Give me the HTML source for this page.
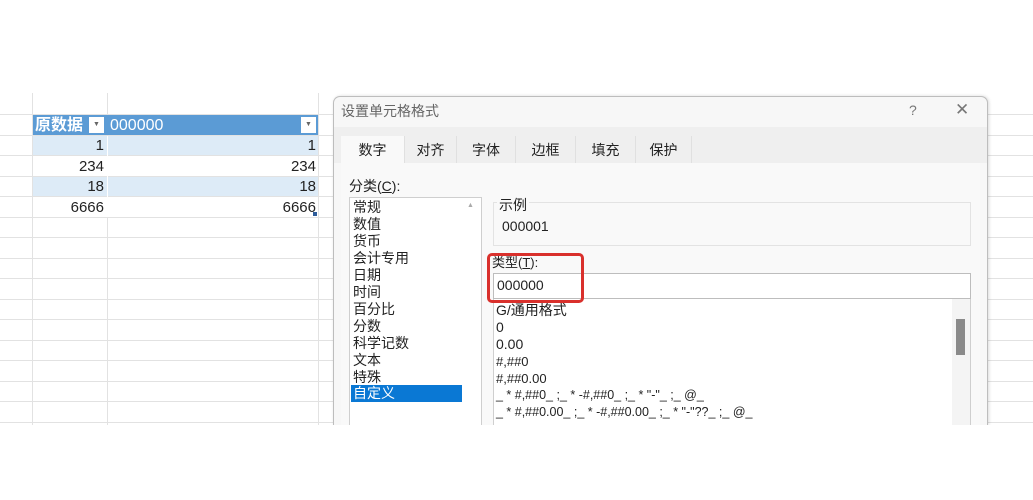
<!DOCTYPE html>
<html><head><meta charset="utf-8"><style>
*{margin:0;padding:0;box-sizing:border-box}
body{width:1033px;height:500px;background:#fff;position:relative;overflow:hidden;font-family:"Liberation Sans","Noto Sans CJK SC",sans-serif;color:#222}
.a{position:absolute}
.hl{position:absolute;height:1px;background:#e2e2e2;left:0;width:1033px}
.vl{position:absolute;width:1px;background:#e2e2e2;top:93px;height:332px}
.num{position:absolute;font-size:15px;text-align:right}
.tab{position:absolute;top:136px;height:27px;font-size:14px;text-align:center;line-height:29px;border-right:1px solid #e0e0e0}
.li{font-size:14px;line-height:17px}
.fl{font-size:13px;line-height:17px}
</style></head><body>
<div class="a" style="left:0;top:93px;width:1033px;height:332px;background:#fff"></div>
<div class="hl" style="top:114px"></div><div class="hl" style="top:135px"></div><div class="hl" style="top:155px"></div><div class="hl" style="top:176px"></div><div class="hl" style="top:196px"></div><div class="hl" style="top:217px"></div><div class="hl" style="top:237px"></div><div class="hl" style="top:258px"></div><div class="hl" style="top:278px"></div><div class="hl" style="top:299px"></div><div class="hl" style="top:319px"></div><div class="hl" style="top:340px"></div><div class="hl" style="top:360px"></div><div class="hl" style="top:381px"></div><div class="hl" style="top:401px"></div><div class="hl" style="top:422px"></div>
<div class="vl" style="left:32px"></div><div class="vl" style="left:107px"></div><div class="vl" style="left:318px"></div>
<div class="a" style="left:33px;top:115px;width:285px;height:20px;background:#5b9bd5"></div>
<div class="a" style="left:35px;top:116px;color:#fff;font-weight:bold;font-size:16px;line-height:19px">原数据</div>
<div class="a" style="left:110px;top:116px;color:#fff;font-size:16px;line-height:19px">000000</div>
<div class="a" style="left:89px;top:117px;width:15px;height:16px;background:#fff;font-size:7px;color:#666;text-align:center;line-height:16px">▼</div>
<div class="a" style="left:301px;top:117px;width:15px;height:16px;background:#fff;font-size:7px;color:#666;text-align:center;line-height:16px">▼</div>
<div class="a" style="left:33px;top:136px;width:285px;height:19px;background:#ddebf7"></div>
<div class="a" style="left:33px;top:177px;width:285px;height:19px;background:#ddebf7"></div>
<div class="a" style="left:107px;top:136px;width:1px;height:81px;background:#fff"></div>
<div class="num" style="right:929px;top:137px">1</div><div class="num" style="right:717px;top:137px">1</div>
<div class="num" style="right:929px;top:158px">234</div><div class="num" style="right:717px;top:158px">234</div>
<div class="num" style="right:929px;top:178px">18</div><div class="num" style="right:717px;top:178px">18</div>
<div class="num" style="right:929px;top:199px">6666</div><div class="num" style="right:717px;top:199px">6666</div>
<div class="a" style="left:313px;top:212px;width:4px;height:4px;background:#2e5c9a"></div>
<div class="a" style="left:333px;top:96px;width:655px;height:329px;background:#f7f7f7;border:1px solid #bdbdbd;border-bottom:none;border-radius:7px 7px 0 0;box-shadow:1px 0 3px rgba(0,0,0,.15)"></div>
<div class="a" style="left:341px;top:102px;font-size:14px;color:#666;line-height:18px">设置单元格格式</div>
<div class="a" style="left:909px;top:102px;font-size:14px;color:#777">?</div>
<div class="a" style="left:955px;top:100px;font-size:17px;color:#777">✕</div>
<div class="a" style="left:334px;top:127px;width:653px;height:36px;background:#efefef"></div>
<div class="tab" style="left:341px;width:64px;background:#f9f9f9;height:28px">数字</div>
<div class="tab" style="left:405px;width:52px">对齐</div>
<div class="tab" style="left:457px;width:59px">字体</div>
<div class="tab" style="left:516px;width:60px">边框</div>
<div class="tab" style="left:576px;width:60px">填充</div>
<div class="tab" style="left:636px;width:56px">保护</div>
<div class="a" style="left:341px;top:163px;width:639px;height:262px;background:#f9f9f9"></div>
<div class="a" style="left:349px;top:176px;font-size:14px">分类(<u>C</u>):</div>
<div class="a" style="left:349px;top:197px;width:133px;height:228px;background:#fff;border:1px solid #cfcfcf;border-bottom:none"></div>
<div class="a" style="left:467px;top:202px;font-size:7px;color:#aaa">▲</div>
<div class="a" style="left:353px;top:199px">
<div class="li">常规</div><div class="li">数值</div><div class="li">货币</div><div class="li">会计专用</div><div class="li">日期</div><div class="li">时间</div><div class="li">百分比</div><div class="li">分数</div><div class="li">科学记数</div><div class="li">文本</div><div class="li">特殊</div></div>
<div class="a" style="left:351px;top:385px;width:111px;height:17px;background:#0a78d4;color:#fff;font-size:14px;line-height:17px;padding-left:2px">自定义</div>
<div class="a" style="left:493px;top:202px;width:478px;height:44px;border:1px solid #e3e3e3"></div>
<div class="a" style="left:497px;top:195px;font-size:14px;background:#f9f9f9;padding:0 2px">示例</div>
<div class="a" style="left:502px;top:218px;font-size:14px">000001</div>
<div class="a" style="left:492px;top:252px;font-size:13px">类型(<u>T</u>):</div>
<div class="a" style="left:493px;top:273px;width:478px;height:26px;background:#fff;border:1px solid #bdbdbd"></div>
<div class="a" style="left:497px;top:277px;font-size:14px">000000</div>
<div class="a" style="left:493px;top:299px;width:478px;height:126px;background:#fff;border:1px solid #cfcfcf;border-top:none;border-bottom:none"></div>
<div class="a" style="left:952px;top:299px;width:18px;height:126px;background:#f4f4f4"></div>
<div class="a" style="left:956px;top:319px;width:9px;height:36px;background:#8a8a8a"></div>
<div class="a" style="left:496px;top:302px">
<div class="fl" style="font-size:14px">G/通用格式</div><div class="fl" style="font-size:14px">0</div><div class="fl" style="font-size:14px">0.00</div><div class="fl">#,##0</div><div class="fl">#,##0.00</div>
<div class="fl" style="font-size:12.5px">_ * #,##0_ ;_ * -#,##0_ ;_ * "-"_ ;_ @_</div>
<div class="fl" style="font-size:12.5px">_ * #,##0.00_ ;_ * -#,##0.00_ ;_ * "-"??_ ;_ @_</div></div>
<div class="a" style="left:487px;top:253px;width:97px;height:50px;border:3px solid #d9302c;border-radius:5px"></div>
<div class="a" style="left:0;top:425px;width:1033px;height:75px;background:#fff"></div>
</body></html>
